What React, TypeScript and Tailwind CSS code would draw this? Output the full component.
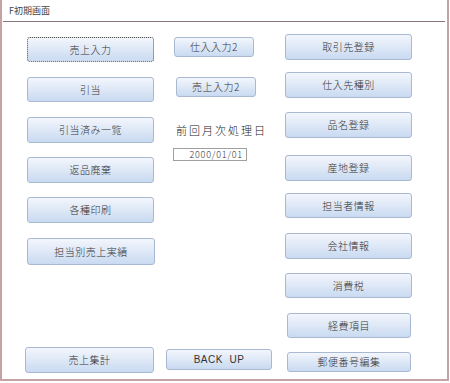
import type { ReactNode } from "react";

const font = { fontFamily: '"Noto Sans CJK JP", "Liberation Sans", sans-serif' };

function FormButton({
  children,
  className = "",
  focused = false,
}: {
  children: ReactNode;
  className?: string;
  focused?: boolean;
}) {
  return (
    <button
      className={
        "flex shrink-0 items-center justify-center rounded-[3px] bg-linear-to-b from-[#f3f6fc] to-[#c9daf1] text-[10px] font-light leading-none tracking-[0.5px] text-[#333] " +
        (focused ? "border border-dotted border-[#555] " : "border border-[#a9b9d1] ") +
        className
      }
      style={font}
    >
      {children}
    </button>
  );
}

export default function App() {
  return (
    <div className="h-[383px] w-[450px] bg-white" style={font}>
      <div className="flex h-[381px] w-[449px] flex-col border-x-2 border-b-2 border-[#c6a2a5]">
        <div className="flex h-[21px] items-center pl-[7px] text-[9px] text-[#444]">F初期画面</div>
        <div className="mx-px h-px w-[442px] bg-[#8a7777]" />

        <div className="flex pl-[23px]">
          {/* left column */}
          <div className="flex w-[130px] flex-col items-start">
            <FormButton focused className="ml-[2px] mt-[15px] h-[25px] w-[127px]">売上入力</FormButton>
            <FormButton className="ml-[2px] mt-[15px] h-[25px] w-[127px]">引当</FormButton>
            <FormButton className="ml-[2px] mt-[15px] h-[26px] w-[127px]">引当済み一覧</FormButton>
            <FormButton className="ml-[2px] mt-[14px] h-[26px] w-[127px]">返品廃棄</FormButton>
            <FormButton className="ml-[2px] mt-[14px] h-[26px] w-[127px]">各種印刷</FormButton>
            <FormButton className="ml-[2px] mt-[15px] h-[27px] w-[128px]">担当別売上実績</FormButton>
            <FormButton className="mt-[82px] h-[26px] w-[129px]">売上集計</FormButton>
          </div>

          {/* middle column */}
          <div className="ml-[11px] flex w-[106px] flex-col items-start">
            <FormButton className="ml-[8px] mt-[15px] h-[20px] w-[80px]">仕入入力2</FormButton>
            <FormButton className="ml-[10px] mt-[20px] h-[20px] w-[80px]">売上入力2</FormButton>
            <div className="ml-[10px] mt-[26px] whitespace-nowrap text-[11px] font-light leading-[15px] tracking-[2px] text-[#222]">前回月次処理日</div>
            <div className="ml-[7px] mt-[10px] flex h-[13px] w-[74px] items-center justify-end border border-[#a0a0a0] bg-white pr-[3px] text-[9px] font-light leading-none tracking-[0.8px] text-[#333]">
              2000/01/01
            </div>
            <FormButton className="mt-[188px] h-[21px] w-[106px]">
              <span style={{ fontFamily: '"Liberation Sans", sans-serif' }}>BACK&nbsp;&nbsp;UP</span>
            </FormButton>
          </div>

          {/* right column */}
          <div className="ml-[13px] flex w-[127px] flex-col items-start">
            <FormButton className="mt-[12px] h-[26px] w-[127px]">取引先登録</FormButton>
            <FormButton className="mt-[12px] h-[26px] w-[127px]">仕入先種別</FormButton>
            <FormButton className="mt-[14px] h-[26px] w-[127px]">品名登録</FormButton>
            <FormButton className="mt-[17px] h-[26px] w-[127px]">産地登録</FormButton>
            <FormButton className="mt-[12px] h-[25px] w-[127px]">担当者情報</FormButton>
            <FormButton className="mt-[15px] h-[26px] w-[127px]">会社情報</FormButton>
            <FormButton className="mt-[14px] h-[25px] w-[127px]">消費税</FormButton>
            <FormButton className="ml-[2px] mt-[15px] h-[25px] w-[124px]">経費項目</FormButton>
            <FormButton className="ml-[2px] mt-[14px] h-[20px] w-[124px]">郵便番号編集</FormButton>
          </div>
        </div>
      </div>
    </div>
  );
}
